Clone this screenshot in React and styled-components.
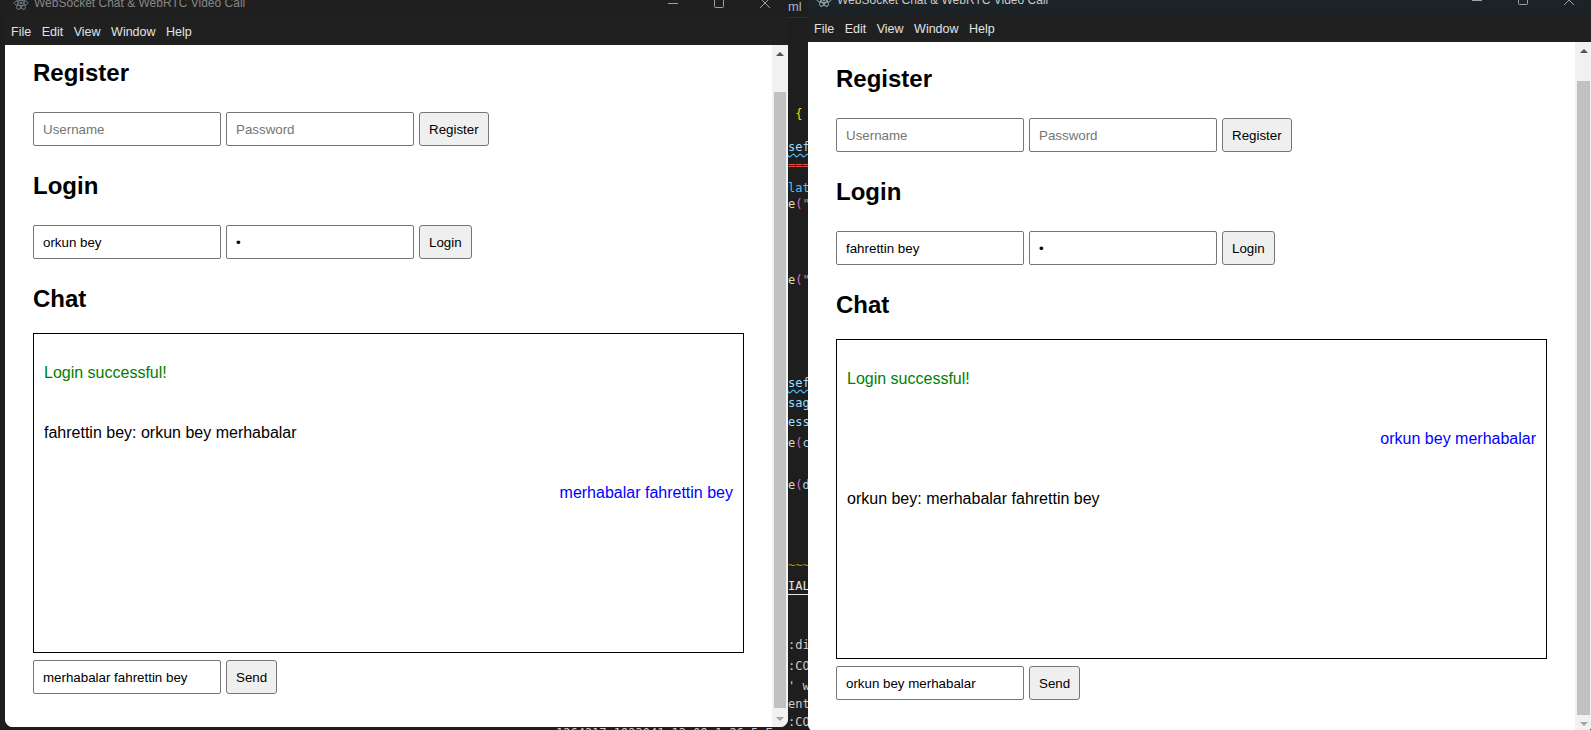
import React from 'react';
import styled, { createGlobalStyle, css } from 'styled-components';

const GlobalStyle = createGlobalStyle`
  html, body {
    margin: 0;
    padding: 0;
    background: #1e1e1e;
    overflow: hidden;
  }

  * {
    box-sizing: border-box;
  }
`;

const Desktop = styled.div`
  display: flex;
  align-items: flex-start;
  width: 1591px;
  height: 730px;
  overflow: hidden;
  background: #1e1e1e;
`;

const LeftColumn = styled.div`
  display: flex;
  flex-direction: column;
  flex: none;
  width: 788px;
  margin-top: -12px;
  overflow: hidden;
`;

// terminal text that peeks out under the left window
const TerminalPeek = styled.div`
  height: 10px;
  padding-left: 556px;
  overflow: hidden;
  color: #cfcfcf;
  font-family: 'DejaVu Sans Mono', 'Liberation Mono', monospace;
  font-size: 12px;
  line-height: 12px;
  white-space: pre;
`;

// narrow slice of the code editor that shows between the two windows
const EditorStrip = styled.div`
  flex: none;
  align-self: stretch;
  width: 20px;
  overflow: hidden;
  background: #1e1e1e;
  font-family: 'DejaVu Sans Mono', 'Liberation Mono', monospace;
  font-size: 12px;
  white-space: pre;
`;

const EditorTab = styled.div`
  height: 18px;
  line-height: 14px;
  color: #9fb6cf;
  font-family: 'Liberation Sans', Arial, sans-serif;
  font-size: 13px;
  border-bottom: 1px solid #2d2d2d;
`;

const CodeLine = styled.div`
  height: 16px;
  line-height: 16px;
  margin-top: ${p => p.shift}px;
`;

const Token = styled.span`
  color: ${p => p.color};
  ${p =>
    p.wavy &&
    css`
      text-decoration: underline wavy #4fc1ff;
      text-underline-offset: 2px;
    `}
  ${p =>
    p.tab &&
    css`
      text-decoration: underline solid #e7e7e7;
      text-underline-offset: 4px;
    `}
`;

const Window = styled.section`
  display: flex;
  flex-direction: column;
  flex: none;
  width: ${p => p.width}px;
  height: ${p => p.height}px;
  margin-top: ${p => p.top || 0}px;
  margin-left: ${p => p.left || 0}px;
  border-radius: 0 0 8px 8px;
  overflow: hidden;
  background: #fff;
`;

const TitleBar = styled.div`
  display: flex;
  align-items: center;
  flex: none;
  height: 30px;
  padding-left: 8px;
  background: ${p => (p.active ? '#1c2326' : '#1f1f1f')};
  color: ${p => (p.active ? '#c8c8c8' : '#868686')};
  font-family: 'Liberation Sans', Arial, sans-serif;
  font-size: 12px;
`;

const AppIcon = styled.svg`
  flex: none;
  width: 16px;
  height: 16px;
  margin-right: 5px;
`;

const TitleText = styled.span`
  flex: 1;
  white-space: nowrap;
`;

const Controls = styled.div`
  display: flex;
  height: 100%;
`;

const ControlButton = styled.div`
  display: flex;
  align-items: center;
  justify-content: center;
  width: 46px;
  height: 100%;
  color: #a0a0a0;
`;

const MenuBar = styled.nav`
  display: flex;
  align-items: center;
  gap: 10.5px;
  flex: none;
  height: 27px;
  padding-left: 6px;
  background: #202020;
  color: #e2e2e2;
  font-family: 'Liberation Sans', Arial, sans-serif;
  font-size: 12.5px;
`;

const Body = styled.div`
  display: flex;
  flex: 1;
  min-height: 0;
`;

const Content = styled.main`
  flex: 1;
  min-width: 0;
  padding: ${p => p.offset}px 28px 0;
  background: #fff;
  font-family: 'Liberation Sans', Arial, sans-serif;
  color: #000;
`;

const Heading = styled.h2`
  margin: 0 0 ${p => (p.tight ? 20 : 25)}px;
  font-size: 24px;
  line-height: 28px;
  font-weight: bold;
`;

const Row = styled.div`
  display: flex;
  gap: 5px;
  margin-bottom: ${p => p.spacing || 0}px;
`;

const Field = styled.input`
  width: 188px;
  height: 34px;
  padding: 0 9px;
  border: 1px solid #767676;
  border-radius: 2px;
  background: #fff;
  color: #000;
  font-family: 'Liberation Sans', Arial, sans-serif;
  font-size: 13.33px;
  outline: none;

  &::placeholder {
    color: #757575;
  }
`;

const Button = styled.button`
  height: 34px;
  padding: 0 9px;
  border: 1px solid #767676;
  border-radius: 3px;
  background: #efefef;
  color: #000;
  font-family: 'Liberation Sans', Arial, sans-serif;
  font-size: 13.33px;
`;

const ChatBox = styled.div`
  display: flex;
  flex-direction: column;
  gap: 40px;
  width: 100%;
  height: 320px;
  margin-bottom: 7px;
  padding: 29px 10px 10px;
  border: 1px solid #000;
  overflow: hidden;
`;

const Message = styled.div`
  font-size: 16px;
  line-height: 20px;
  white-space: nowrap;
  color: ${p => (p.kind === 'system' ? 'green' : p.kind === 'own' ? 'blue' : '#000')};
  text-align: ${p => (p.kind === 'own' ? 'right' : 'left')};
`;

const Scrollbar = styled.div`
  display: flex;
  flex-direction: column;
  flex: none;
  width: ${p => p.width}px;
  background: #f1f1f1;
`;

const ArrowBox = styled.div`
  display: flex;
  align-items: center;
  justify-content: center;
  flex: none;
  height: 17px;

  &::after {
    content: '';
    border-left: 4px solid transparent;
    border-right: 4px solid transparent;
    ${p =>
      p.down
        ? css`
            border-top: 4px solid #a3a3a3;
          `
        : css`
            border-bottom: 4px solid #505050;
          `}
  }
`;

const Track = styled.div`
  display: flex;
  flex: 1;
  padding: ${p => p.before}px 2px ${p => p.after}px;
`;

const Thumb = styled.div`
  flex: 1;
  background: #c1c1c1;
`;

// y = centre of the line on the page
const code = [
  { y: 114, t: [[' {', '#ffd700']] },
  { y: 147, t: [['sef', '#9cdcfe', 'wavy']] },
  { y: 165, t: [['===', '#f14c4c']] },
  { y: 188, t: [['lat', '#4fc1ff']] },
  { y: 204, t: [['e', '#dcdcaa'], ['(', '#da70d6'], ['"', '#ce9178']] },
  { y: 280, t: [['e', '#dcdcaa'], ['(', '#da70d6'], ['"', '#ce9178']] },
  { y: 383, t: [['sef', '#9cdcfe', 'wavy']] },
  { y: 403, t: [['sag', '#9cdcfe']] },
  { y: 422, t: [['ess', '#9cdcfe']] },
  { y: 443, t: [['e', '#dcdcaa'], ['(', '#da70d6'], ['c', '#9cdcfe']] },
  { y: 485, t: [['e', '#dcdcaa'], ['(', '#da70d6'], ['d', '#9cdcfe']] },
  { y: 565, t: [['~~~', '#b89500']] },
  { y: 586, t: [['IAL', '#e7e7e7', 'tab']] },
  { y: 645, t: [[':di', '#cccccc']] },
  { y: 666, t: [[':CO', '#cccccc']] },
  { y: 686, t: [["' w", '#cccccc']] },
  { y: 704, t: [['ent', '#cccccc']] },
  { y: 722, t: [[':CO', '#cccccc']] },
];

const ElectronIcon = ({ color }) => (
  <AppIcon viewBox='0 0 16 16' fill='none' stroke={color} strokeWidth='0.9'>
    <ellipse cx='8' cy='8' rx='7' ry='2.6' />
    <ellipse cx='8' cy='8' rx='7' ry='2.6' transform='rotate(60 8 8)' />
    <ellipse cx='8' cy='8' rx='7' ry='2.6' transform='rotate(120 8 8)' />
    <circle cx='8' cy='8' r='1.2' fill={color} stroke='none' />
  </AppIcon>
);

const WindowControls = () => (
  <Controls>
    <ControlButton>
      <svg width='10' height='10' viewBox='0 0 10 10' stroke='currentColor' strokeWidth='1'>
        <line x1='0' y1='5.5' x2='10' y2='5.5' />
      </svg>
    </ControlButton>
    <ControlButton>
      <svg width='10' height='10' viewBox='0 0 10 10' fill='none' stroke='currentColor' strokeWidth='1'>
        <rect x='0.5' y='0.5' width='9' height='9' rx='1' />
      </svg>
    </ControlButton>
    <ControlButton>
      <svg width='10' height='10' viewBox='0 0 10 10' stroke='currentColor' strokeWidth='1'>
        <line x1='0' y1='0' x2='10' y2='10' />
        <line x1='10' y1='0' x2='0' y2='10' />
      </svg>
    </ControlButton>
  </Controls>
);

const ChatWindow = props => {
  const { user, draft, messages, active, offset, thumbBefore, thumbAfter, scrollWidth } = props;

  return (
    <Window width={props.width} height={props.height} top={props.top} left={props.left}>
      <TitleBar active={active}>
        <ElectronIcon color={active ? '#9fb4bc' : '#6f7c82'} />
        <TitleText>WebSocket Chat &amp; WebRTC Video Call</TitleText>
        <WindowControls />
      </TitleBar>
      <MenuBar>
        <span>File</span>
        <span>Edit</span>
        <span>View</span>
        <span>Window</span>
        <span>Help</span>
      </MenuBar>
      <Body>
        <Content offset={offset}>
          <Heading>Register</Heading>
          <Row spacing={26}>
            <Field placeholder='Username' readOnly />
            <Field type='password' placeholder='Password' readOnly />
            <Button>Register</Button>
          </Row>

          <Heading>Login</Heading>
          <Row spacing={26}>
            <Field defaultValue={user} readOnly />
            <Field type='password' defaultValue='1' readOnly />
            <Button>Login</Button>
          </Row>

          <Heading tight>Chat</Heading>
          <ChatBox>
            {messages.map((m, i) => (
              <Message key={i} kind={m.kind}>
                {m.text}
              </Message>
            ))}
          </ChatBox>
          <Row>
            <Field defaultValue={draft} readOnly />
            <Button>Send</Button>
          </Row>
        </Content>
        <Scrollbar width={scrollWidth}>
          <ArrowBox />
          <Track before={thumbBefore} after={thumbAfter}>
            <Thumb />
          </Track>
          <ArrowBox down />
        </Scrollbar>
      </Body>
    </Window>
  );
};

const App = () => (
  <>
    <GlobalStyle />
    <Desktop>
      <LeftColumn>
        <ChatWindow
          left={5}
          width={783}
          height={739}
          offset={14}
          scrollWidth={16}
          thumbBefore={30}
          thumbAfter={2}
          user='orkun bey'
          draft='merhabalar fahrettin bey'
          messages={[
            { kind: 'system', text: 'Login successful!' },
            { kind: 'other', text: 'fahrettin bey: orkun bey merhabalar' },
            { kind: 'own', text: 'merhabalar fahrettin bey' },
          ]}
        />
        <TerminalPeek>1264217:1923041:13:09:1:26:5:Error:CO</TerminalPeek>
      </LeftColumn>
      <EditorStrip>
        <EditorTab>ml</EditorTab>
        {code.map((line, i) => {
          const prevBottom = i === 0 ? 18 : code[i - 1].y + 8;
          return (
            <CodeLine key={i} shift={line.y - 8 - prevBottom}>
              {line.t.map(([t, c, mode], j) => (
                <Token key={j} color={c} wavy={mode === 'wavy'} tab={mode === 'tab'}>
                  {t}
                </Token>
              ))}
            </CodeLine>
          );
        })}
      </EditorStrip>
      <ChatWindow
        active
        width={784}
        height={747}
        top={-15}
        offset={23}
        scrollWidth={17}
        thumbBefore={22}
        thumbAfter={0}
        user='fahrettin bey'
        draft='orkun bey merhabalar'
        messages={[
          { kind: 'system', text: 'Login successful!' },
          { kind: 'own', text: 'orkun bey merhabalar' },
          { kind: 'other', text: 'orkun bey: merhabalar fahrettin bey' },
        ]}
      />
    </Desktop>
  </>
);

export default App;
